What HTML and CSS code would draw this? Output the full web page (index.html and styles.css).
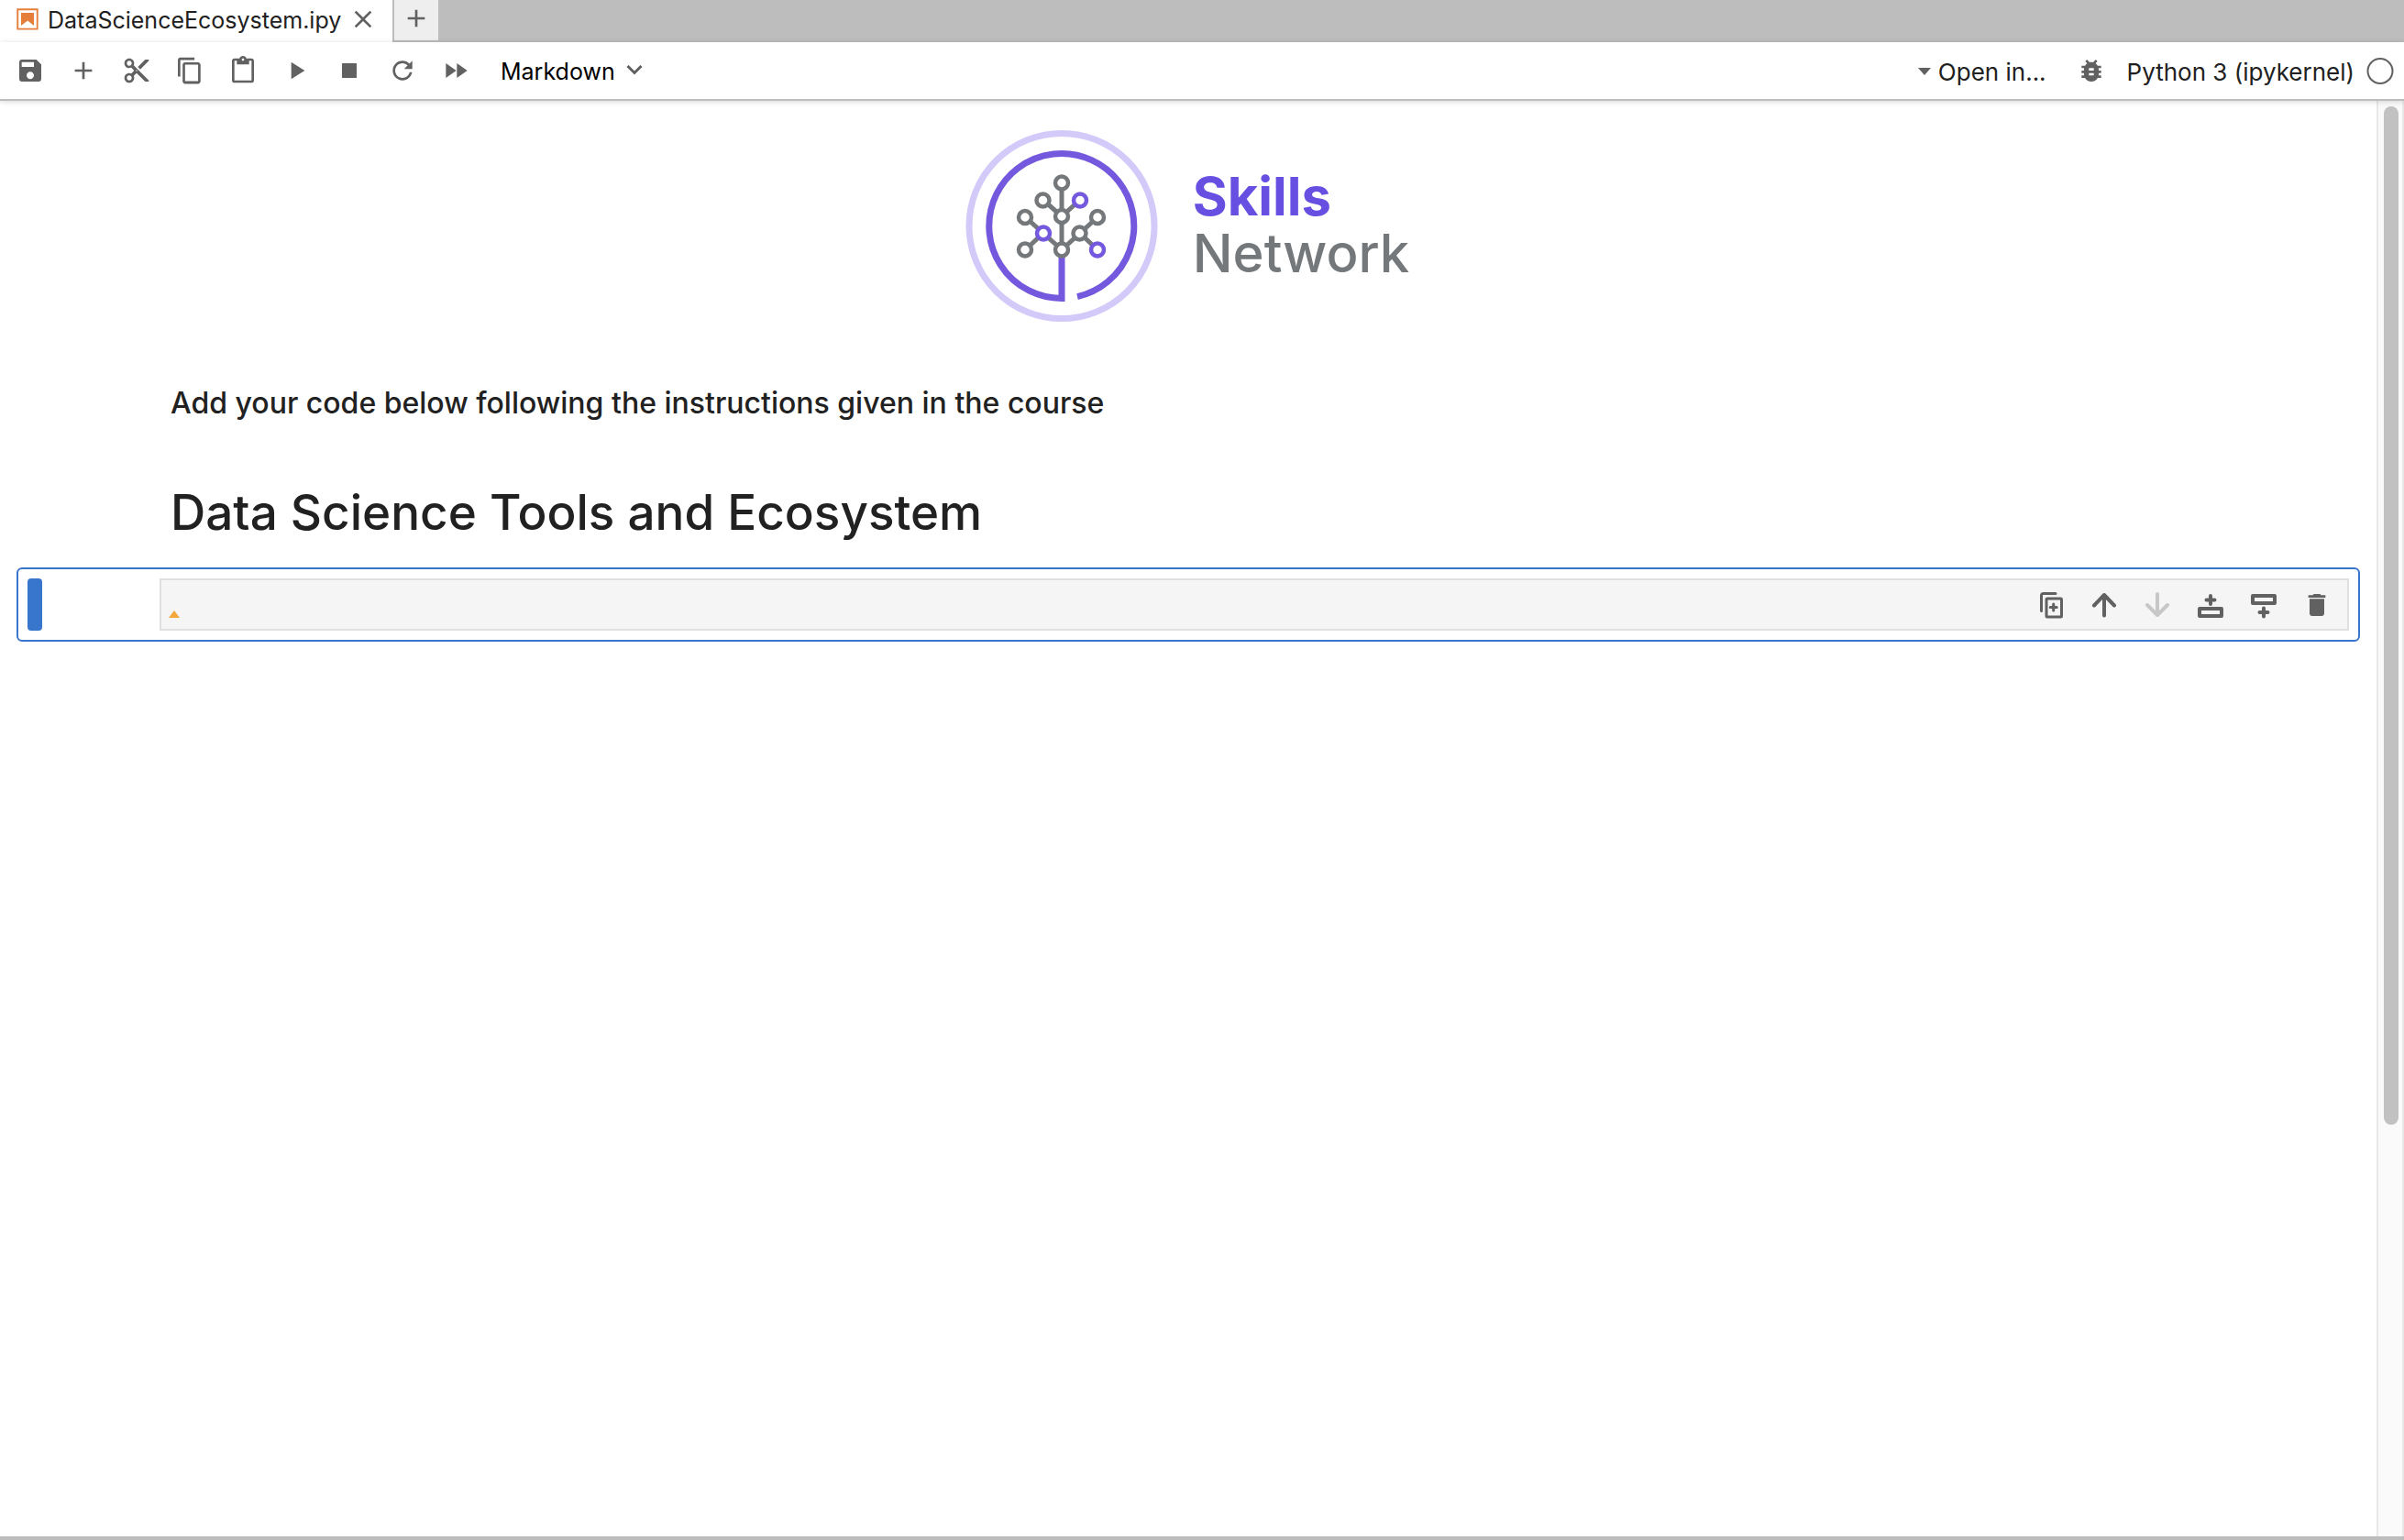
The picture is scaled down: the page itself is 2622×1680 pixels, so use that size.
FILE: index.html
```html
<!DOCTYPE html>
<html lang="en">
<head>
<meta charset="utf-8">
<title>DataScienceEcosystem.ipynb</title>
<link rel="stylesheet" href="styles.css">
</head>
<body>
<div class="app">
  <nav class="tabs" aria-label="Open documents">
    <div class="tab">
      <svg class="tab-icon" viewBox="0 0 22 22"><path d="M18.7 3.3v15.4H3.3V3.3h15.4m1.5-1.5H1.8v18.3h18.3l.1-18.3z"/><path d="M16.5 16.5l-5.4-4.3-5.6 4.3v-11h11z"/></svg>
      <span class="tab-name">DataScienceEcosystem.ipy</span>
      <button class="tab-close" aria-label="Close tab"><svg class="icon" viewBox="0 0 24 24"><path d="M19 6.41L17.59 5 12 10.59 6.41 5 5 6.41 10.59 12 5 17.59 6.41 19 12 13.41 17.59 19 19 17.59 13.41 12z"/></svg></button>
    </div>
    <button class="tab-add" aria-label="New launcher"><svg class="icon" viewBox="0 0 24 24"><path d="M19 13h-6v6h-2v-6H5v-2h6V5h2v6h6v2z"/></svg></button>
  </nav>

  <header class="toolbar">
    <div class="tools">
      <button class="tool" aria-label="Save"><svg class="icon" viewBox="0 0 24 24"><path d="M17 3H5c-1.11 0-2 .9-2 2v14c0 1.1.89 2 2 2h14c1.1 0 2-.9 2-2V7l-4-4zm-5 16c-1.66 0-3-1.34-3-3s1.34-3 3-3 3 1.34 3 3-1.34 3-3 3zm3-10H5V5h10v4z"/></svg></button>
      <button class="tool" aria-label="Insert cell"><svg class="icon" viewBox="0 0 24 24"><path d="M19 13h-6v6h-2v-6H5v-2h6V5h2v6h6v2z"/></svg></button>
      <button class="tool" aria-label="Cut"><svg class="icon" viewBox="0 0 24 24"><path d="M9.64 7.64c.23-.5.36-1.05.36-1.64 0-2.21-1.79-4-4-4S2 3.79 2 6s1.79 4 4 4c.59 0 1.14-.13 1.64-.36L10 12l-2.36 2.36C7.14 14.13 6.59 14 6 14c-2.21 0-4 1.79-4 4s1.79 4 4 4 4-1.79 4-4c0-.59-.13-1.14-.36-1.64L12 14l7 7h3v-1L9.64 7.64zM6 8c-1.1 0-2-.89-2-2s.9-2 2-2 2 .89 2 2-.9 2-2 2zm0 12c-1.1 0-2-.89-2-2s.9-2 2-2 2 .89 2 2-.9 2-2 2zm6-7.5c-.28 0-.5-.22-.5-.5s.22-.5.5-.5.5.22.5.5-.22.5-.5.5zM19 3l-6 6 2 2 7-7V3z"/></svg></button>
      <button class="tool" aria-label="Copy"><svg class="icon" viewBox="0 0 18 18"><path d="M11.9 1H3.2C2.4 1 1.7 1.7 1.7 2.5v10.2h1.5V2.5h8.7V1zM14.1 3.9h-8c-.8 0-1.5.7-1.5 1.5v10.2c0 .8.7 1.5 1.5 1.5h8c.8 0 1.5-.7 1.5-1.5V5.4c-.1-.8-.7-1.5-1.5-1.5zm0 11.6h-8V5.4h8v10.1z"/></svg></button>
      <button class="tool" aria-label="Paste"><svg class="icon" viewBox="0 0 24 24"><path d="M19 2h-4.18C14.4.84 13.3 0 12 0c-1.3 0-2.4.84-2.82 2H5c-1.1 0-2 .9-2 2v16c0 1.1.9 2 2 2h14c1.1 0 2-.9 2-2V4c0-1.1-.9-2-2-2zm-7 0c.55 0 1 .45 1 1s-.45 1-1 1-1-.45-1-1 .45-1 1-1zm7 18H5V4h2v3h10V4h2v16z"/></svg></button>
      <button class="tool" aria-label="Run"><svg class="icon" viewBox="0 0 24 24"><path d="M8 5v14l11-7z"/></svg></button>
      <button class="tool" aria-label="Interrupt kernel"><svg class="icon" viewBox="0 0 24 24"><path d="M6 6h12v12H6z"/></svg></button>
      <button class="tool" aria-label="Restart kernel"><svg class="icon" viewBox="0 0 18 18"><path d="M9 13.5c-2.49 0-4.5-2.01-4.5-4.5S6.51 4.5 9 4.5c1.24 0 2.36.52 3.17 1.33L10 8h5V3l-1.76 1.76C12.15 3.68 10.66 3 9 3 5.69 3 3.01 5.69 3.01 9S5.69 15 9 15c2.97 0 5.43-2.16 5.9-5h-1.52c-.46 2-2.24 3.5-4.38 3.5z"/></svg></button>
      <button class="tool" aria-label="Restart and run all"><svg class="icon" viewBox="0 0 24 24"><path d="M4 18l8.5-6L4 6v12zm9-12v12l8.5-6L13 6z"/></svg></button>
    </div>
    <div class="cell-type">
      <select class="cell-type-select" aria-label="Cell type"><option>Markdown</option><option>Code</option><option>Raw</option></select>
      <svg class="chevron" viewBox="0 0 18 12"><path d="M1.5 1L9 8.5 16.5 1"/></svg>
    </div>
    <div class="kernel">
      <button class="open-in"><svg class="caret" viewBox="0 0 14 8"><path d="M0 0h14L7 8z"/></svg>Open in...</button>
      <button class="tool" aria-label="Debugger"><svg class="icon" viewBox="0 0 24 24"><path d="M20 8h-2.81c-.45-.78-1.07-1.45-1.82-1.96L17 4.41 15.59 3l-2.17 2.17C12.96 5.06 12.49 5 12 5c-.49 0-.96.06-1.41.17L8.41 3 7 4.41l1.62 1.63C7.88 6.55 7.26 7.22 6.81 8H4v2h2.09c-.05.33-.09.66-.09 1v1H4v2h2v1c0 .34.04.67.09 1H4v2h2.81c1.04 1.79 2.97 3 5.19 3s4.15-1.21 5.19-3H20v-2h-2.09c.05-.33.09-.66.09-1v-1h2v-2h-2v-1c0-.34-.04-.67-.09-1H20V8zm-6 8h-4v-2h4v2zm0-4h-4v-2h4v2z"/></svg></button>
      <button class="kernel-name">Python 3 (ipykernel)</button>
      <svg class="icon status" viewBox="0 0 32 32"><circle cx="16" cy="16.5" r="13.5"/></svg>
    </div>
  </header>

  <div class="workspace">
    <main class="notebook">
      <div class="brand">
        <svg class="brand-mark" viewBox="0 0 210 210">
          <circle class="halo" cx="105" cy="104.5" r="101"/>
          <path class="ring" d="M105 138V183.5A79 79 0 1 1 122 181.6"/>
          <path class="branch" d="M105 58V130M84.5 76L105 94l20-18M65.5 95L105 130.5 144 95M65.5 130.5l19-18M125 112.5l19 18"/>
          <g class="node"><circle cx="105" cy="57.5" r="7"/><circle cx="84.5" cy="76.5" r="7"/><circle cx="105" cy="94" r="7"/><circle cx="65" cy="95" r="7"/><circle cx="144" cy="95" r="7"/><circle cx="124.5" cy="112.5" r="7"/><circle cx="65" cy="130.5" r="7"/><circle cx="105" cy="130.5" r="7"/></g>
          <g class="node node-accent"><circle cx="125" cy="76.5" r="7"/><circle cx="85" cy="112.5" r="7"/><circle cx="144" cy="130.5" r="7"/></g>
        </svg>
        <div class="brand-text"><span class="brand-skills">Skills</span><span class="brand-network">Network</span></div>
      </div>
      <h3 class="note">Add your code below following the instructions given in the course</h3>
      <h1 class="title">Data Science Tools and Ecosystem</h1>

      <section class="cell" aria-label="Selected cell">
        <div class="collapser"></div>
        <div class="editor">
          <svg class="marker" viewBox="0 0 12 8"><path d="M6 0l6 8H0z"/></svg>
          <div class="cell-tools">
            <button class="tool" aria-label="Duplicate cell"><svg class="icon line" viewBox="0 0 32 32"><path d="M21 3.5H7.500a2 2 0 0 0-2 2V22.500M18.700 15v7M15.200 18.500h7"/><rect x="11" y="9" width="16.500" height="20" rx="1"/></svg></button>
            <button class="tool" aria-label="Move cell up"><svg class="icon line bold" viewBox="0 0 32 32"><path d="M16 27.5V5M5 16.500L16 5l11 11.500"/></svg></button>
            <button class="tool" aria-label="Move cell down" disabled><svg class="icon line bold" viewBox="0 0 32 32"><path d="M16 4v23M5 16L16 27l11-11"/></svg></button>
            <button class="tool" aria-label="Insert cell above"><svg class="icon line bold" viewBox="0 0 32 32"><rect x="4" y="20" width="24" height="8"/><path d="M16 6v9M11.500 10.500h9"/></svg></button>
            <button class="tool" aria-label="Insert cell below"><svg class="icon line bold" viewBox="0 0 32 32"><rect x="4" y="6" width="24" height="8"/><path d="M16 19.500v9M11.500 24h9"/></svg></button>
            <button class="tool" aria-label="Delete cell"><svg class="icon" viewBox="0 0 24 24"><path d="M6 19c0 1.100.9 2 2 2h8c1.100 0 2-.9 2-2V7H6v12zM19 4h-3.500l-1-1h-5l-1 1H5v2h14V4z"/></svg></button>
          </div>
        </div>
      </section>
    </main>
    <div class="scroll-track"><div class="scroll-thumb"></div></div>
  </div>
</div>
</body>
</html>
```
FILE: styles.css
```css
* {
  box-sizing: border-box;
}

body {
  margin: 0;
  background: #fff;
  color: #212121;
  font-family: Inter, "Liberation Sans", sans-serif;
  font-size: 25px;
}

button,
select {
  padding: 0;
  border: 0;
  background: none;
  color: inherit;
  font: inherit;
}

svg {
  display: block;
  flex: none;
}

.app {
  display: flex;
  flex-direction: column;
  min-height: 100vh;
  border-bottom: 4px solid #bdbdbd;
}

.icon {
  width: 32px;
  height: 32px;
  fill: #616161;
}

.line {
  fill: none;
  stroke: #616161;
  stroke-width: 3;
  stroke-linecap: round;
  stroke-linejoin: round;
}

.bold {
  stroke-width: 4;
}

/* Tab bar */
.tabs {
  display: flex;
  height: 46px;
  background: #bdbdbd;
}

.tab {
  display: flex;
  align-items: center;
  width: 428px;
  padding: 0 16px 4px;
  background: #fff;
}

.tab-icon {
  width: 28px;
  height: 28px;
  margin-right: 8px;
  fill: #e67e3c;
}

.tab-name {
  flex: none;
  width: 328px;
  padding-top: 2px;
  white-space: nowrap;
}

.tab-add {
  display: grid;
  place-items: center;
  width: 50px;
  padding-bottom: 4px;
  border: solid #bdbdbd;
  border-width: 0 0 2px 2px;
  background: #eee;
}

/* Notebook toolbar */
.toolbar {
  position: relative;
  display: flex;
  align-items: center;
  height: 64px;
  padding: 0 10px 0 4px;
  border-bottom: 2px solid #bdbdbd;
  box-shadow: 0 1px 6px rgba(0, 0, 0, 0.16);
}

.tools,
.cell-tools {
  display: flex;
}

.tool {
  display: grid;
  place-items: center;
  width: 58px;
  height: 48px;
}

.cell-type {
  display: grid;
  align-items: center;
  margin-left: 20px;
}

.cell-type-select {
  grid-area: 1 / 1;
  width: 160px;
  padding-top: 2px;
  color: #000;
  appearance: none;
}

.chevron {
  grid-area: 1 / 1;
  justify-self: end;
  width: 18px;
  height: 12px;
  margin-right: 5px;
  fill: none;
  stroke: #616161;
  stroke-width: 3;
  pointer-events: none;
}

.kernel {
  display: flex;
  align-items: center;
  margin-left: auto;
  font-size: 26px;
}

.open-in {
  display: flex;
  align-items: center;
  gap: 8px;
  margin-right: 20px;
  padding-top: 2px;
}

.caret {
  width: 14px;
  height: 8px;
  fill: #616161;
}

.kernel-name {
  margin: 0 12px 0 10px;
  padding-top: 2px;
}

.status {
  fill: none;
  stroke: #616161;
  stroke-width: 2;
}

/* Notebook body */
.workspace {
  display: flex;
  flex: 1;
}

.notebook {
  flex: 1;
  padding: 32px 18px 0;
}

.brand {
  display: flex;
  align-items: center;
  justify-content: center;
  gap: 38px;
  padding-right: 2px;
}

.brand-mark {
  width: 210px;
  height: 210px;
  fill: none;
}

.halo {
  stroke: #d4cafa;
  stroke-width: 7;
}

.ring {
  stroke: #7459de;
  stroke-width: 7;
}

.branch {
  stroke: #75787b;
  stroke-width: 5;
}

.node {
  fill: #fff;
  stroke: #75787b;
  stroke-width: 4.5;
}

.node-accent {
  stroke: #7459de;
}

.brand-text {
  display: flex;
  flex-direction: column;
  padding-bottom: 4px;
  font-size: 58px;
  line-height: 62px;
}

.brand-skills {
  color: #664fe1;
  font-weight: 700;
}

.brand-network {
  color: #75787b;
  font-weight: 500;
}

.note,
.title {
  margin: 0 0 0 168px;
  font-weight: 500;
}

.note {
  padding-top: 64px;
  font-size: 32px;
  line-height: 48px;
}

.title {
  padding: 59px 0 24px;
  font-size: 53px;
  line-height: 72px;
}

.cell {
  display: flex;
  gap: 128px;
  padding: 10px;
  border: 2px solid #3875cc;
  border-radius: 6px;
}

.collapser {
  width: 16px;
  border-radius: 4px;
  background: #3875cc;
}

.editor {
  display: flex;
  flex: 1;
  align-items: center;
  justify-content: space-between;
  height: 57px;
  padding: 0 4px 0 8px;
  border: 2px solid #e0e0e0;
  background: #f5f5f5;
}

.marker {
  align-self: flex-end;
  width: 12px;
  height: 8px;
  margin-bottom: 12px;
  fill: #f4a83a;
}

.tool:disabled {
  opacity: 0.3;
}

/* Scrollbar */
.scroll-track {
  width: 30px;
  padding: 6px 4px 0 6px;
  border: solid #e8e8e8;
  border-width: 0 2px;
  background: #fafafa;
}

.scroll-thumb {
  width: 16px;
  height: 71.2%;
  border-radius: 8px;
  background: #c1c1c1;
}
```
